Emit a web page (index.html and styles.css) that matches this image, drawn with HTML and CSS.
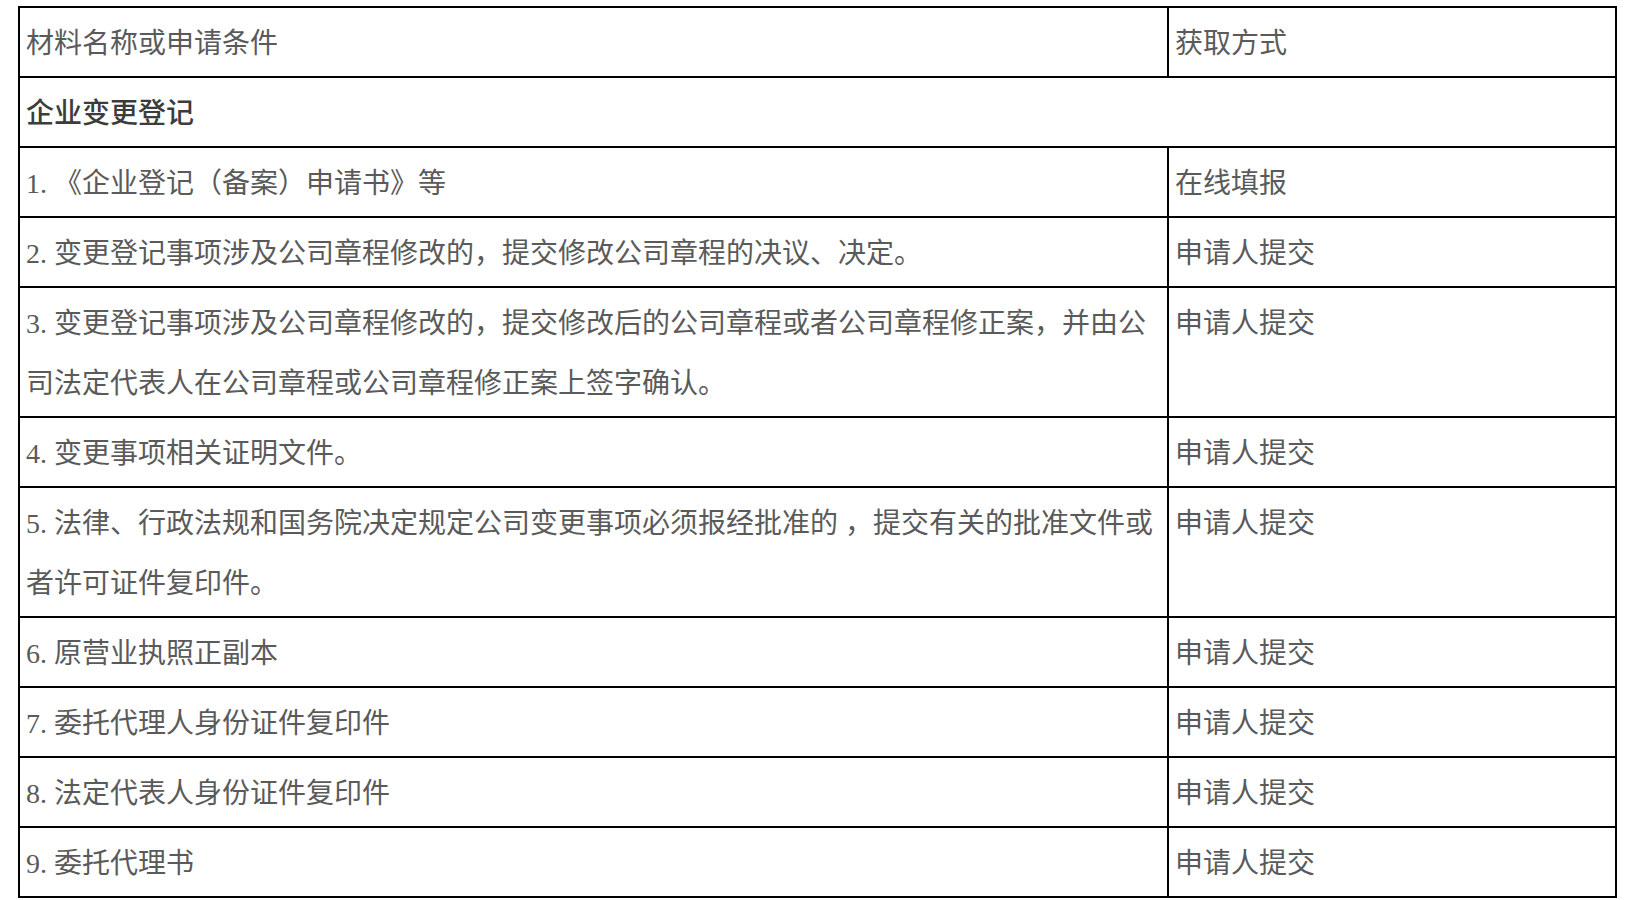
FILE: index.html
```html
<!DOCTYPE html>
<html lang="zh-CN">
<head>
<meta charset="utf-8">
<title>材料名称或申请条件</title>
<link rel="stylesheet" href="styles.css">
</head>
<body>
<table class="materials">
  <colgroup>
    <col class="col-name">
    <col class="col-way">
  </colgroup>
  <tbody>
    <tr><td>材料名称或申请条件</td><td>获取方式</td></tr>
    <tr><td class="section" colspan="2">企业变更登记</td></tr>
    <tr><td>1. 《企业登记（备案）申请书》等</td><td>在线填报</td></tr>
    <tr><td>2. 变更登记事项涉及公司章程修改的，提交修改公司章程的决议、决定。</td><td>申请人提交</td></tr>
    <tr><td>3. 变更登记事项涉及公司章程修改的，提交修改后的公司章程或者公司章程修正案，并由公司法定代表人在公司章程或公司章程修正案上签字确认。</td><td>申请人提交</td></tr>
    <tr><td>4. 变更事项相关证明文件。</td><td>申请人提交</td></tr>
    <tr><td>5. 法律、行政法规和国务院决定规定公司变更事项必须报经批准的 ，提交有关的批准文件或者许可证件复印件。</td><td>申请人提交</td></tr>
    <tr><td>6. 原营业执照正副本</td><td>申请人提交</td></tr>
    <tr><td>7. 委托代理人身份证件复印件</td><td>申请人提交</td></tr>
    <tr><td>8. 法定代表人身份证件复印件</td><td>申请人提交</td></tr>
    <tr><td>9. 委托代理书</td><td>申请人提交</td></tr>
  </tbody>
</table>
</body>
</html>
```

FILE: styles.css
```css
html, body {
  margin: 0;
  background: #ffffff;
}

body {
  padding: 6px 0 0 18px;
  font-family: "Liberation Serif", "Noto Sans CJK SC", serif;
  font-size: 28px;
  color: #5a5a5a;
}

.materials {
  border-collapse: separate;
  border-spacing: 0;
  table-layout: fixed;
  width: 1599px;
  border-left: 2px solid #000;
  border-top: 2px solid #000;
}

.col-name {
  width: 1149px;
}

.col-way {
  width: 448px;
}

.materials td {
  box-sizing: border-box;
  border-right: 2px solid #000;
  border-bottom: 2px solid #000;
  padding: 6px 6px 2px;
  line-height: 60px;
  vertical-align: top;
  font-weight: 400;
}

.materials td.section {
  font-weight: 500;
  color: #3c3c3c;
}
```
